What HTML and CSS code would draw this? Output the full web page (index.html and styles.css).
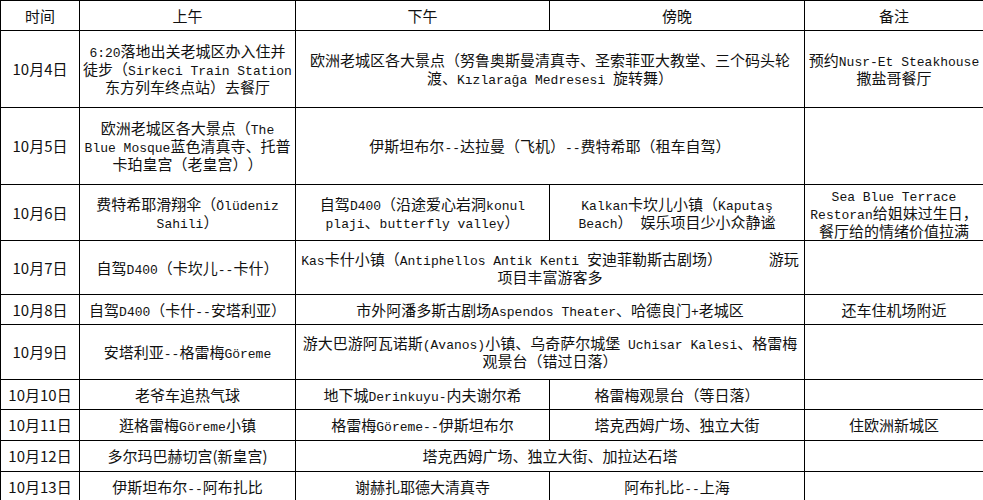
FILE: index.html
```html
<!DOCTYPE html>
<html lang="zh-CN">
<head>
<meta charset="utf-8">
<title>土耳其行程</title>
<link rel="stylesheet" href="styles.css">
</head>
<body>
<table class="plan">
  <colgroup>
    <col class="c-date">
    <col class="c-am">
    <col class="c-pm">
    <col class="c-eve">
    <col class="c-note">
  </colgroup>
  <tr class="h30">
    <td class="date">时间</td>
    <td>上午</td>
    <td>下午</td>
    <td>傍晚</td>
    <td>备注</td>
  </tr>
  <tr class="h77">
    <td class="date">10月4日</td>
    <td><span class="en">6:20</span>落地出关老城区办入住并<br>徒步（<span class="en">Sirkeci Train Station</span><br>东方列车终点站）去餐厅</td>
    <td colspan="2">欧洲老城区各大景点（努鲁奥斯曼清真寺、圣索菲亚大教堂、三个码头轮<br>渡、<span class="en">Kızlarağa Medresesi </span>旋转舞）</td>
    <td>预约<span class="en">Nusr-Et Steakhouse</span><br>撒盐哥餐厅</td>
  </tr>
  <tr class="h77">
    <td class="date">10月5日</td>
    <td>欧洲老城区各大景点（<span class="en">The</span><br><span class="en">Blue Mosque</span>蓝色清真寺、托普<br>卡珀皇宫（老皇宫））</td>
    <td colspan="2">伊斯坦布尔<span class="en">--</span>达拉曼（飞机）<span class="en">--</span>费特希耶（租车自驾）</td>
    <td></td>
  </tr>
  <tr class="h56">
    <td class="date">10月6日</td>
    <td>费特希耶滑翔伞（<span class="en">Ölüdeniz</span><br><span class="en">Sahili</span>）</td>
    <td>自驾<span class="en">D400</span>（沿途爱心岩洞<span class="en">konul</span><br><span class="en">plaji</span>、<span class="en">butterfly valley</span>）</td>
    <td><span class="en">Kalkan</span>卡坎儿小镇（<span class="en">Kaputaş</span><br><span class="en">Beach</span>）<span class="en"> </span>娱乐项目少小众静谧</td>
    <td><span class="en">Sea Blue Terrace</span><br><span class="en">Restoran</span>给姐妹过生日，<br>餐厅给的情绪价值拉满</td>
  </tr>
  <tr class="h54">
    <td class="date">10月7日</td>
    <td>自驾<span class="en">D400</span>（卡坎儿<span class="en">--</span>卡什）</td>
    <td colspan="2"><span class="en">Kas</span>卡什小镇（<span class="en">Antiphellos Antik Kenti </span>安迪菲勒斯古剧场）<span class="en">&nbsp;&nbsp;&nbsp;&nbsp;&nbsp;&nbsp;</span>游玩<br>项目丰富游客多</td>
    <td></td>
  </tr>
  <tr class="h30">
    <td class="date">10月8日</td>
    <td>自驾<span class="en">D400</span>（卡什<span class="en">--</span>安塔利亚）</td>
    <td colspan="2">市外阿潘多斯古剧场<span class="en">Aspendos Theater</span>、哈德良门<span class="en">+</span>老城区</td>
    <td>还车住机场附近</td>
  </tr>
  <tr class="h55">
    <td class="date">10月9日</td>
    <td>安塔利亚<span class="en">--</span>格雷梅<span class="en">Göreme</span></td>
    <td colspan="2">游大巴游阿瓦诺斯<span class="en">(Avanos)</span>小镇、乌奇萨尔城堡<span class="en"> Uchisar Kalesi</span>、格雷梅<br>观景台（错过日落）</td>
    <td></td>
  </tr>
  <tr class="h30">
    <td class="date">10月10日</td>
    <td>老爷车追热气球</td>
    <td>地下城<span class="en">Derinkuyu-</span>内夫谢尔希</td>
    <td>格雷梅观景台（等日落）</td>
    <td></td>
  </tr>
  <tr class="h31">
    <td class="date">10月11日</td>
    <td>逛格雷梅<span class="en">Göreme</span>小镇</td>
    <td>格雷梅<span class="en">Göreme--</span>伊斯坦布尔</td>
    <td>塔克西姆广场、独立大街</td>
    <td>住欧洲新城区</td>
  </tr>
  <tr class="h31">
    <td class="date">10月12日</td>
    <td>多尔玛巴赫切宫(新皇宫)</td>
    <td colspan="2">塔克西姆广场、独立大街、加拉达石塔</td>
    <td></td>
  </tr>
  <tr class="h30">
    <td class="date">10月13日</td>
    <td>伊斯坦布尔<span class="en">--</span>阿布扎比</td>
    <td>谢赫扎耶德大清真寺</td>
    <td>阿布扎比<span class="en">--</span>上海</td>
    <td></td>
  </tr>
</table>
</body>
</html>
```

FILE: styles.css
```css
html, body {
  margin: 0;
  padding: 0;
  background: #fff;
}

body {
  color: #111;
  font-family: "Noto Sans CJK SC", "Liberation Sans", sans-serif;
  font-size: 15px;
  text-spacing-trim: space-all;
}

.plan {
  border-collapse: collapse;
  table-layout: fixed;
  width: 983px;
}

.c-date { width: 79px; }
.c-am { width: 216px; }
.c-pm { width: 254px; }
.c-eve { width: 255px; }
.c-note { width: 179px; }

.plan td {
  border: 1px solid #000;
  padding: 0;
  text-align: center;
  vertical-align: middle;
  line-height: 18px;
  white-space: nowrap;
  overflow: visible;
}

.en {
  font-family: "Liberation Mono", monospace;
  font-size: 13px;
  line-height: 1;
}

.h30 { height: 30px; }
.h31 { height: 31px; }
.h54 { height: 54px; }
.h55 { height: 55px; }
.h56 { height: 56px; }
.h77 { height: 77px; }
```
